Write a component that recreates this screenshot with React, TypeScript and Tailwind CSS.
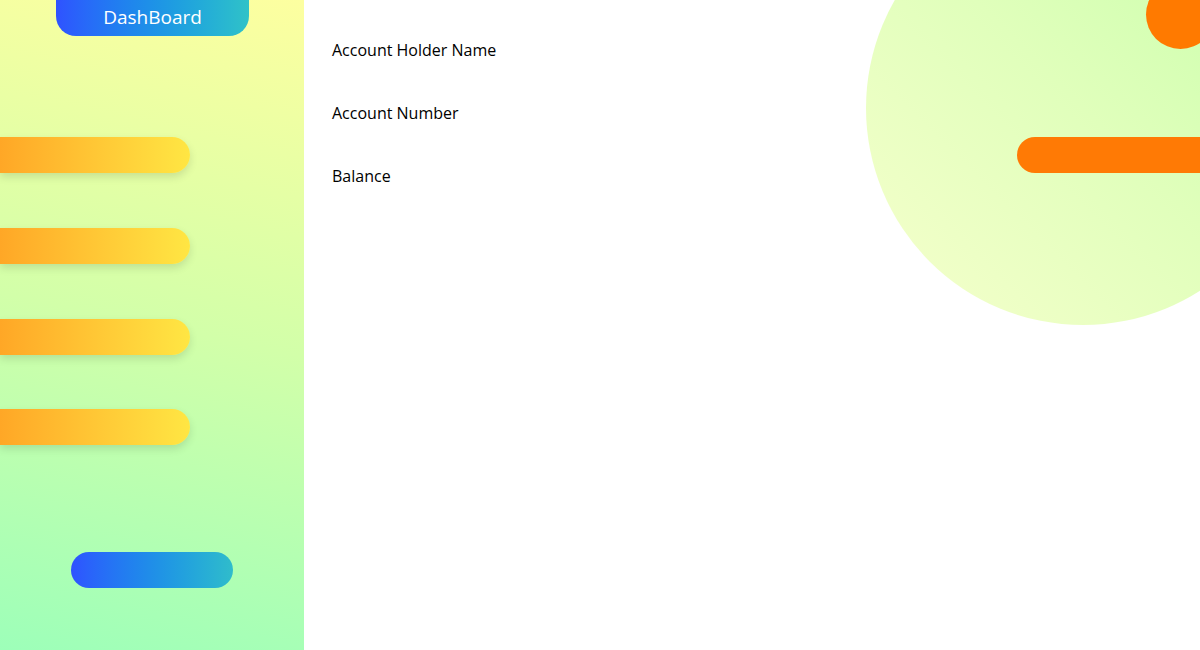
import React from 'react'

const labels = ['Account Holder Name', 'Account Number', 'Balance']

function NavPill({ className = '' }: { className?: string }) {
  return (
    <div className={`h-[36px] w-[190px] rounded-r-full bg-linear-to-r from-[#ffa726] to-[#ffe643] shadow-[0_4px_8px_rgba(0,0,0,0.12)] ${className}`} />
  )
}

export default function App() {
  return (
    <div className="flex h-[650px] w-[1200px] overflow-hidden bg-white" style={{ fontFamily: '"Open Sans", "Noto Sans", sans-serif' }}>
      <aside className="flex w-[304px] shrink-0 flex-col bg-linear-[12deg] from-[#9dffb9] via-[#d2ffa9] to-[#fdffa0]">
        <div className="ml-[56px] flex h-[36px] w-[193px] items-center justify-center rounded-b-[20px] bg-linear-to-r from-[#2f52ff] to-[#30c2c8] pb-[1px] text-[19px] text-white">
          DashBoard
        </div>
        <NavPill className="mt-[101px]" />
        <NavPill className="mt-[55px]" />
        <NavPill className="mt-[55px]" />
        <NavPill className="mt-[54px]" />
        <div className="ml-[71px] mt-[107px] h-[36px] w-[162px] rounded-full bg-linear-to-r from-[#2f52ff] to-[#30bccb]" />
      </aside>

      <main className="relative flex-1 overflow-hidden">
        <div className="absolute left-[562px] top-[-109px] h-[434px] w-[434px] rounded-full bg-linear-to-tr from-[#f6ffcc] via-[#e0ffbb] to-[#c4ffa9]" />
        <div className="absolute left-[842px] top-[-20px] h-[69px] w-[69px] rounded-full bg-[#ff7a00]" />
        <div className="absolute left-[713px] top-[137px] h-[36px] w-[200px] rounded-l-full bg-[#ff7a05]" />

        <div className="relative flex flex-col gap-[40px] pl-[28px] pt-[39px] text-[16px] font-normal text-black">
          {labels.map((l) => (
            <p key={l} className="leading-[23px]">{l}</p>
          ))}
        </div>
      </main>
    </div>
  )
}
